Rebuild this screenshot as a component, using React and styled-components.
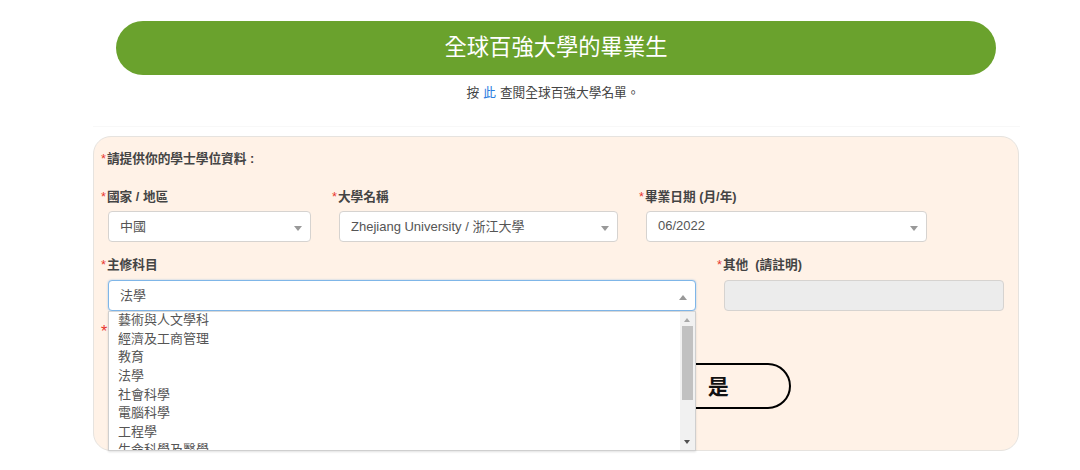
import React from "react";
import styled, { createGlobalStyle } from "styled-components";

const GlobalStyle = createGlobalStyle`
  html, body {
    margin: 0;
    padding: 0;
    background: #fff;
  }
  body {
    font-family: "Liberation Sans", "Noto Sans CJK TC", sans-serif;
    color: #555;
  }
`;

const Page = styled.div`
  width: 1080px;
  height: 470px;
  overflow: hidden;
  padding-top: 21px;
  box-sizing: border-box;
`;

const Banner = styled.h1`
  width: 880px;
  height: 54px;
  margin: 0 0 0 116px;
  padding-bottom: 6px;
  box-sizing: border-box;
  border-radius: 27px;
  background: #6aa22d;
  color: #fff;
  font-size: 22.3px;
  font-weight: 400;
  display: flex;
  align-items: center;
  justify-content: center;
`;

const Note = styled.p`
  margin: 10px 0 0 0;
  height: 16px;
  line-height: 16px;
  font-size: 12.7px;
  color: #444;
  text-align: center;
  padding-left: 26px;
`;

const NoteLink = styled.a`
  color: #2b7de0;
  margin: 0 4px;
`;

const Divider = styled.div`
  margin: 25px 60px 0 93px;
  height: 1px;
  background: #f8f8f8;
`;

const Panel = styled.section`
  width: 926px;
  height: 315px;
  margin: 9px 0 0 93px;
  box-sizing: border-box;
  padding: 13px 15px 0 7px;
  background: #fff2e7;
  border: 1px solid #e6e3df;
  border-radius: 18px;
`;

const Label = styled.div`
  height: 18px;
  line-height: 18px;
  font-size: 12.7px;
  font-weight: 700;
  color: #444;
  white-space: nowrap;
`;

const Star = styled.span`
  color: #e8352e;
  font-weight: 400;
  margin-right: 1px;
`;

const Row = styled.div`
  display: flex;
  margin-top: ${(p) => p.$top}px;
`;

const Field = styled.div`
  width: ${(p) => p.$width}px;
  position: relative;
`;

const Control = styled.div`
  position: relative;
  box-sizing: border-box;
  width: ${(p) => p.$width}px;
  height: 31px;
  margin: ${(p) => p.$top ?? 6}px 0 0 7px;
  padding: 0 0 2px 11px;
  display: flex;
  align-items: center;
  font-size: 13px;
  color: #555;
  background: ${(p) => (p.$disabled ? "#ececec" : "#fff")};
  border: 1px solid ${(p) => (p.$open ? "#7fb6e8" : "#d6d3d0")};
  border-radius: 4px;
  box-shadow: ${(p) => (p.$open ? "0 0 2px rgba(90,160,230,0.6)" : "none")};
`;

const Caret = styled.span`
  position: absolute;
  right: 8px;
  top: 14px;
  width: 0;
  height: 0;
  border-left: 4.5px solid transparent;
  border-right: 4.5px solid transparent;
  ${(p) =>
    p.$up ? "border-bottom: 5px solid #999;" : "border-top: 5px solid #999;"}
`;

const Dropdown = styled.div`
  position: absolute;
  left: 7px;
  top: 55px;
  z-index: 5;
  box-sizing: border-box;
  width: 588px;
  height: 140px;
  overflow: hidden;
  background: #fff;
  border: 1px solid #cfcfcf;
  border-top-color: #d8d8d8;
  box-shadow: 0 1px 2px rgba(0, 0, 0, 0.12);
`;

const Option = styled.div`
  height: 18.65px;
  line-height: 18.65px;
  padding-left: 9px;
  font-size: 13px;
  color: #555;
  white-space: nowrap;
  &:first-child {
    margin-top: -1px;
  }
`;

const ScrollTrack = styled.div`
  position: absolute;
  top: 0;
  right: 0;
  bottom: 0;
  width: 15px;
  background: #f1f1f1;
`;

const ScrollThumb = styled.div`
  position: absolute;
  top: 14px;
  left: 2px;
  width: 11px;
  height: 74px;
  background: #c1c1c1;
`;

const ScrollArrow = styled.span`
  position: absolute;
  left: 4px;
  width: 0;
  height: 0;
  border-left: 3.5px solid transparent;
  border-right: 3.5px solid transparent;
  ${(p) =>
    p.$up
      ? "top: 6px; border-bottom: 4px solid #a8a8a8;"
      : "bottom: 6px; border-top: 4px solid #505050;"}
`;

const AnswerRow = styled.div`
  display: flex;
  margin-top: 12px;
  height: 90px;
`;

const AnswerButton = styled.button`
  width: 200px;
  height: 46px;
  margin: 40px 0 0 483px;
  padding: 0 0 3px 54px;
  box-sizing: border-box;
  background: transparent;
  border: 2px solid #000;
  border-radius: 23px;
  font-family: inherit;
  font-size: 21px;
  font-weight: 700;
  color: #111;
  display: flex;
  align-items: center;
  justify-content: center;
`;

const majors = [
  "藝術與人文學科",
  "經濟及工商管理",
  "教育",
  "法學",
  "社會科學",
  "電腦科學",
  "工程學",
  "生命科學及醫學",
];

const App = () => {
  return (
    <Page>
      <GlobalStyle />
      <Banner>全球百強大學的畢業生</Banner>
      <Note>
        按<NoteLink>此</NoteLink>查閱全球百強大學名單。
      </Note>
      <Divider />
      <Panel>
        <Label>
          <Star>*</Star>請提供你的學士學位資料 :
        </Label>
        <Row $top={20}>
          <Field $width={231}>
            <Label>
              <Star>*</Star>國家 / 地區
            </Label>
            <Control $width={203} $top={5}>
              中國
              <Caret />
            </Control>
          </Field>
          <Field $width={307}>
            <Label>
              <Star>*</Star>大學名稱
            </Label>
            <Control $width={279} $top={5}>
              Zhejiang University / 浙江大學
              <Caret />
            </Control>
          </Field>
          <Field $width={288}>
            <Label>
              <Star>*</Star>畢業日期 (月/年)
            </Label>
            <Control $width={281} $top={5}>
              06/2022
              <Caret />
            </Control>
          </Field>
        </Row>
        <Row $top={14}>
          <Field $width={616}>
            <Label>
              <Star>*</Star>主修科目
            </Label>
            <Control $width={588} $open>
              法學
              <Caret $up />
            </Control>
            <Dropdown>
              {majors.map((major) => (
                <Option key={major}>{major}</Option>
              ))}
              <ScrollTrack>
                <ScrollArrow $up />
                <ScrollThumb />
                <ScrollArrow />
              </ScrollTrack>
            </Dropdown>
          </Field>
          <Field $width={286}>
            <Label>
              <Star>*</Star>其他 &nbsp;(請註明)
            </Label>
            <Control $width={280} $disabled />
          </Field>
        </Row>
        <AnswerRow>
          <Star>*</Star>
          <AnswerButton>是</AnswerButton>
        </AnswerRow>
      </Panel>
    </Page>
  );
};

export default App;
